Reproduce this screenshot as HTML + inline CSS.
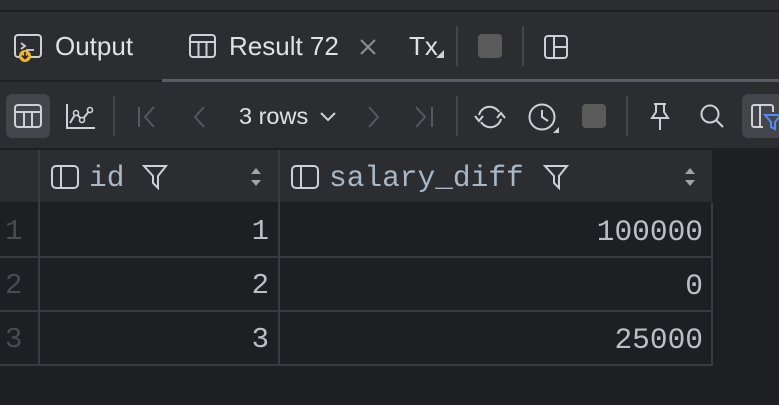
<!DOCTYPE html>
<html><head><meta charset="utf-8"><style>
*{margin:0;padding:0;box-sizing:border-box}
body{width:779px;height:405px;background:#1e1f22;position:relative;overflow:hidden;font-family:"Liberation Sans",sans-serif}
.a{position:absolute}
.mono{font-family:"Liberation Mono","DejaVu Sans Mono",monospace}
svg{position:absolute;overflow:visible}
</style></head><body>
<div class="a" style="left:0;top:0;width:779px;height:10px;background:#2b2d30"></div>
<div class="a" style="left:0;top:10px;width:779px;height:2px;background:#1e1f22"></div>
<div class="a" style="left:0;top:12px;width:779px;height:68px;background:#2b2d30"></div>
<div class="a" style="left:0;top:80px;width:779px;height:2px;background:#1e1f22"></div>
<div class="a" style="left:162px;top:79px;width:617px;height:3px;background:#5a5d63"></div>
<div class="a" style="left:0;top:82px;width:779px;height:66px;background:#2b2d30"></div>

<svg style="left:14px;top:34px" width="28" height="28"><rect x="1" y="1" width="26" height="22" rx="3" fill="none" stroke="#ced0d6" stroke-width="2"/><path d="M7 9l4 3-4 3" fill="none" stroke="#ced0d6" stroke-width="1.8"/><line x1="12" y1="16" x2="20" y2="16" stroke="#ced0d6" stroke-width="1.8"/><circle cx="11" cy="22" r="6" fill="#f0b528"/><path d="M11 18v6M8 21.5l3 3 3-3" stroke="#2b2d30" stroke-width="1.8" fill="none"/></svg>
<div class="a" style="left:55px;top:31px;font-size:26px;color:#dfe1e5">Output</div>
<svg style="left:189px;top:34px" width="28" height="24"><rect x="1" y="1" width="25" height="22" rx="3" fill="none" stroke="#ced0d6" stroke-width="2"/><line x1="1" y1="8" x2="26" y2="8" stroke="#ced0d6" stroke-width="2"/><line x1="9.5" y1="8" x2="9.5" y2="23" stroke="#ced0d6" stroke-width="2"/><line x1="17.5" y1="8" x2="17.5" y2="23" stroke="#ced0d6" stroke-width="2"/></svg>
<div class="a" style="left:229px;top:31px;font-size:26px;color:#dfe1e5">Result 72</div>
<svg style="left:360px;top:39px" width="16" height="16"><path d="M1 1L15 15M15 1L1 15" stroke="#8c8f94" stroke-width="2"/></svg>
<div class="a" style="left:409px;top:31px;font-size:26px;color:#dfe1e5">Tx</div>
<svg style="left:436px;top:50px" width="8" height="8"><path d="M0 8L8 0V8Z" fill="#ced0d6"/></svg>
<div class="a" style="left:456px;top:26px;width:2px;height:40px;background:#43454a"></div>
<div class="a" style="left:478px;top:34px;width:24px;height:24px;border-radius:4px;background:#5a5a5a"></div>
<div class="a" style="left:522px;top:26px;width:2px;height:40px;background:#43454a"></div>
<svg style="left:544px;top:35px" width="24" height="24"><rect x="1" y="1" width="22" height="22" rx="3" fill="none" stroke="#ced0d6" stroke-width="2"/><line x1="10" y1="1" x2="10" y2="23" stroke="#ced0d6" stroke-width="2"/><line x1="10" y1="12" x2="23" y2="12" stroke="#ced0d6" stroke-width="2"/></svg>

<div class="a" style="left:6px;top:94px;width:44px;height:44px;border-radius:6px;background:#43454a"></div>
<svg style="left:14px;top:104px" width="28" height="24"><rect x="1" y="1" width="26" height="22" rx="3" fill="none" stroke="#ced0d6" stroke-width="2"/><line x1="1" y1="8" x2="27" y2="8" stroke="#ced0d6" stroke-width="2"/><line x1="10" y1="8" x2="10" y2="23" stroke="#ced0d6" stroke-width="2"/><line x1="18" y1="8" x2="18" y2="23" stroke="#ced0d6" stroke-width="2"/></svg>
<svg style="left:66px;top:103px" width="30" height="26"><path d="M1 1V25H29" fill="none" stroke="#ced0d6" stroke-width="2"/><path d="M4 20L10 10L16 17L24 7" fill="none" stroke="#ced0d6" stroke-width="2"/><circle cx="10" cy="10" r="2.5" fill="#2b2d30" stroke="#ced0d6" stroke-width="1.6"/><circle cx="16" cy="17" r="2.5" fill="#2b2d30" stroke="#ced0d6" stroke-width="1.6"/><circle cx="24" cy="7" r="2.5" fill="#2b2d30" stroke="#ced0d6" stroke-width="1.6"/></svg>
<div class="a" style="left:113px;top:96px;width:2px;height:40px;background:#43454a"></div>
<svg style="left:138px;top:106px" width="20" height="22"><line x1="1" y1="1" x2="1" y2="21" stroke="#55585e" stroke-width="2"/><path d="M16 1L7 11L16 21" fill="none" stroke="#55585e" stroke-width="2"/></svg>
<svg style="left:192px;top:106px" width="14" height="22"><path d="M12 1L3 11L12 21" fill="none" stroke="#55585e" stroke-width="2"/></svg>
<div class="a" style="left:239px;top:103px;font-size:23.5px;color:#dfe1e5">3 rows</div>
<svg style="left:320px;top:112px" width="16" height="10"><path d="M1 1L8 8L15 1" fill="none" stroke="#ced0d6" stroke-width="2"/></svg>
<svg style="left:367px;top:106px" width="14" height="22"><path d="M2 1L11 11L2 21" fill="none" stroke="#55585e" stroke-width="2"/></svg>
<svg style="left:414px;top:106px" width="20" height="22"><path d="M2 1L11 11L2 21" fill="none" stroke="#55585e" stroke-width="2"/><line x1="18" y1="1" x2="18" y2="21" stroke="#55585e" stroke-width="2"/></svg>
<div class="a" style="left:456px;top:96px;width:2px;height:40px;background:#43454a"></div>
<svg style="left:473px;top:103px" width="34" height="28"><path d="M6 12A11 11 0 0 1 26 9" fill="none" stroke="#ced0d6" stroke-width="2"/><path d="M28 16A11 11 0 0 1 8 19" fill="none" stroke="#ced0d6" stroke-width="2"/><path d="M2 13L6 18L10 13" fill="none" stroke="#ced0d6" stroke-width="2"/><path d="M24 15L28 10L32 15" fill="none" stroke="#ced0d6" stroke-width="2"/></svg>
<svg style="left:528px;top:103px" width="32" height="30"><circle cx="14" cy="14" r="12.5" fill="none" stroke="#ced0d6" stroke-width="2"/><path d="M14 7V14L20 18" fill="none" stroke="#ced0d6" stroke-width="2"/><path d="M25 30L31 24V30Z" fill="#ced0d6"/></svg>
<div class="a" style="left:582px;top:104px;width:24px;height:24px;border-radius:4px;background:#5a5a5a"></div>
<div class="a" style="left:626px;top:96px;width:2px;height:40px;background:#43454a"></div>
<svg style="left:649px;top:103px" width="22" height="28"><path d="M5 1H17M7 1V9L3 15H19L15 9V1M11 15V27" fill="none" stroke="#ced0d6" stroke-width="2"/></svg>
<svg style="left:700px;top:104px" width="26" height="26"><circle cx="10" cy="10" r="8.5" fill="none" stroke="#ced0d6" stroke-width="2"/><line x1="16" y1="16" x2="23" y2="23" stroke="#ced0d6" stroke-width="2"/></svg>
<div class="a" style="left:742px;top:94px;width:44px;height:44px;border-radius:6px;background:#43454a"></div>
<svg style="left:751px;top:104px" width="30" height="26"><path d="M22 8V3A2 2 0 0 0 20 1H3A2 2 0 0 0 1 3V21A2 2 0 0 0 3 23H12" fill="none" stroke="#ced0d6" stroke-width="2"/><line x1="9" y1="1" x2="9" y2="23" stroke="#ced0d6" stroke-width="2"/><path d="M14 11H30L24 18V25L20 23V18Z" fill="none" stroke="#548af7" stroke-width="2"/></svg>

<div class="a" style="left:0;top:150px;width:712px;height:52px;background:#2b2d30"></div>
<div class="a" style="left:38px;top:150px;width:2px;height:215px;background:#393b40"></div>
<div class="a" style="left:278px;top:150px;width:2px;height:215px;background:#393b40"></div>
<div class="a" style="left:711px;top:203px;width:2px;height:162px;background:#393b40"></div>
<div class="a" style="left:0;top:256px;width:713px;height:2px;background:#393b40"></div>
<div class="a" style="left:0;top:310px;width:713px;height:2px;background:#393b40"></div>
<div class="a" style="left:0;top:364px;width:713px;height:2px;background:#393b40"></div>

<svg style="left:51px;top:165px" width="28" height="24"><rect x="1" y="1" width="26" height="22" rx="4" fill="none" stroke="#ced0d6" stroke-width="2"/><line x1="10" y1="1" x2="10" y2="23" stroke="#ced0d6" stroke-width="2"/></svg>
<div class="a mono" style="left:89px;top:161px;font-size:29.5px;color:#a9b7c6">id</div>
<svg style="left:143px;top:165px" width="24" height="24"><path d="M1 1H23L15 11V23L10 18V11Z" fill="none" stroke="#ced0d6" stroke-width="2"/></svg>
<svg style="left:250px;top:167px" width="12" height="20"><path d="M1 7L6 1L11 7Z M1 13L6 19L11 13Z" fill="#a0a3a8"/></svg>

<svg style="left:291px;top:165px" width="28" height="24"><rect x="1" y="1" width="26" height="22" rx="4" fill="none" stroke="#ced0d6" stroke-width="2"/><line x1="10" y1="1" x2="10" y2="23" stroke="#ced0d6" stroke-width="2"/></svg>
<div class="a mono" style="left:329px;top:161px;font-size:29.5px;color:#a9b7c6">salary_diff</div>
<svg style="left:544px;top:165px" width="24" height="24"><path d="M1 1H23L15 11V23L10 18V11Z" fill="none" stroke="#ced0d6" stroke-width="2"/></svg>
<svg style="left:684px;top:167px" width="12" height="20"><path d="M1 7L6 1L11 7Z M1 13L6 19L11 13Z" fill="#a0a3a8"/></svg>

<div class="a mono" style="left:5px;top:215px;font-size:29px;color:#484b51">1</div>
<div class="a mono" style="left:5px;top:269px;font-size:29px;color:#484b51">2</div>
<div class="a mono" style="left:5px;top:323px;font-size:29px;color:#484b51">3</div>
<div class="a mono" style="right:510px;top:215px;font-size:29px;color:#bcbec4">1</div>
<div class="a mono" style="right:510px;top:269px;font-size:29px;color:#bcbec4">2</div>
<div class="a mono" style="right:510px;top:323px;font-size:29px;color:#bcbec4">3</div>
<div class="a mono" style="right:76px;top:215px;font-size:29.5px;color:#bcbec4">100000</div>
<div class="a mono" style="right:76px;top:269px;font-size:29.5px;color:#bcbec4">0</div>
<div class="a mono" style="right:76px;top:323px;font-size:29.5px;color:#bcbec4">25000</div>
</body></html>
